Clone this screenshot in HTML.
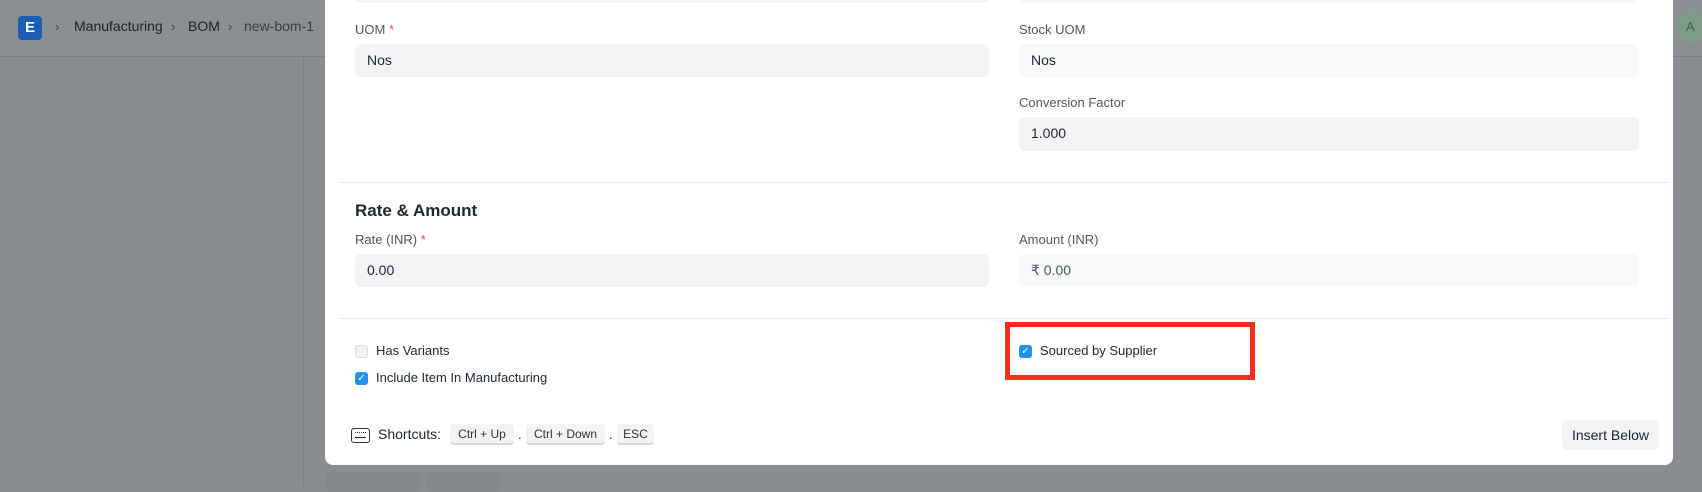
<!DOCTYPE html>
<html><head><style>
*{box-sizing:border-box;margin:0;padding:0}
body{width:1702px;height:483px;overflow:hidden;background:#8a8d90;font-family:"Liberation Sans",sans-serif;position:relative;color:#1f272e}
.abs{position:absolute}
.hdr{left:0;top:0;width:1702px;height:57px;background:#8c8f92;border-bottom:1px solid #7e8184}
.logo{left:18px;top:16px;width:24px;height:24px;background:#1a5fb4;border-radius:4px;color:#fff;font-weight:bold;font-size:15px;text-align:center;line-height:24px}
.bc{top:18px;font-size:14px;color:#1d2227}
.ch{color:#3a3f44;font-size:13px;top:19px}
.modal{left:325px;top:-10px;width:1348px;height:475px;background:#fff;border-radius:8px}
.lbl{font-size:13px;color:#50565c}
.req{color:#e24c4c}
.inp{height:33px;border-radius:6px;background:#f3f3f5;font-size:14px;padding-left:12px;line-height:33px;color:#1f272e}
.div{height:1px;background:#ebeced}
.cb{width:13px;height:13px;border-radius:3px}
.on{background:#2490ef}
.off{background:#f1f1f2;border:1px solid #d8dadc}
.t13{font-size:13px;color:#1f272e}
.kbd{top:424px;height:21px;background:#f3f3f5;border-radius:4px;border-bottom:2px solid #d4d6d8;font-size:12px;line-height:20px;text-align:center;color:#333}
</style></head><body>
<div class="abs hdr"></div>
<div class="abs logo">E</div>
<div class="abs bc ch" style="left:55px">›</div>
<div class="abs bc" style="left:74px">Manufacturing</div>
<div class="abs bc ch" style="left:171px">›</div>
<div class="abs bc" style="left:188px">BOM</div>
<div class="abs bc ch" style="left:228px">›</div>
<div class="abs bc" style="left:244px;color:#383d42">new-bom-1</div>
<div class="abs" style="left:303px;top:57px;width:1px;height:430px;background:#7f8285"></div>
<div class="abs" style="left:1676px;top:10px;width:30px;height:34px;border-radius:15px;background:#7f9a88;color:#2e6b45;font-size:13px;line-height:34px;padding-left:10px">A</div>
<div class="abs" style="left:325px;top:472px;width:95px;height:20px;border-radius:6px;background:#85888b"></div>
<div class="abs" style="left:427px;top:472px;width:73px;height:20px;border-radius:6px;background:#85888b"></div>

<div class="abs modal"></div>
<div class="abs inp" style="left:355px;top:-30px;width:634px"></div>
<div class="abs inp" style="left:1019px;top:-30px;width:620px;background:#f7f8f8"></div>

<div class="abs lbl" style="left:355px;top:22px">UOM <span class="req">*</span></div>
<div class="abs inp" style="left:355px;top:44px;width:634px">Nos</div>
<div class="abs lbl" style="left:1019px;top:22px">Stock UOM</div>
<div class="abs inp" style="left:1019px;top:44px;width:620px;background:#f7f8f8">Nos</div>
<div class="abs lbl" style="left:1019px;top:95px">Conversion Factor</div>
<div class="abs inp" style="left:1019px;top:117px;width:620px;height:34px">1.000</div>
<div class="abs div" style="left:339px;top:182px;width:1330px"></div>
<div class="abs" style="left:355px;top:201px;font-size:17px;font-weight:bold;color:#1f272e">Rate &amp; Amount</div>
<div class="abs lbl" style="left:355px;top:232px">Rate (INR) <span class="req">*</span></div>
<div class="abs inp" style="left:355px;top:254px;width:634px">0.00</div>
<div class="abs lbl" style="left:1019px;top:232px">Amount (INR)</div>
<div class="abs inp" style="left:1019px;top:254px;width:620px;background:#f7f8f8;color:#50565c">₹ 0.00</div>
<div class="abs div" style="left:339px;top:318px;width:1330px"></div>

<div class="abs cb off" style="left:355px;top:345px"></div>
<div class="abs t13" style="left:376px;top:343px">Has Variants</div>
<div class="abs cb on" style="left:355px;top:372px;color:#fff;font-size:10px;text-align:center;line-height:13px">✓</div>
<div class="abs t13" style="left:376px;top:370px">Include Item In Manufacturing</div>
<div class="abs cb on" style="left:1019px;top:345px;color:#fff;font-size:10px;text-align:center;line-height:13px">✓</div>
<div class="abs t13" style="left:1040px;top:343px">Sourced by Supplier</div>
<div class="abs" style="left:1005px;top:322px;width:250px;height:58px;border:5px solid #fb2b1b"></div>

<div class="abs" style="left:351px;top:428px;width:19px;height:15px;border:1.5px solid #333;border-radius:3px"><div style="margin:3px 3px;height:6px;border-top:1px dotted #333;border-bottom:1px solid #333"></div></div>
<div class="abs" style="left:378px;top:426px;font-size:14px;color:#1f272e">Shortcuts:</div>
<div class="abs kbd" style="left:450px;width:64px">Ctrl + Up</div>
<div class="abs t13" style="left:518px;top:427px">.</div>
<div class="abs kbd" style="left:526px;width:79px">Ctrl + Down</div>
<div class="abs t13" style="left:609px;top:427px">.</div>
<div class="abs kbd" style="left:617px;width:37px">ESC</div>
<div class="abs" style="left:1562px;top:420px;width:97px;height:30px;border-radius:6px;background:#f3f3f5;font-size:14px;line-height:30px;text-align:center">Insert Below</div>
</body></html>
